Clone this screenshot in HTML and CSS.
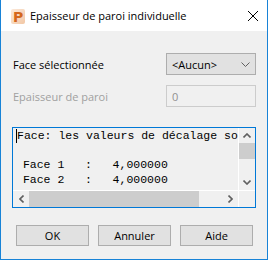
FILE: index.html
```html
<!DOCTYPE html>
<html lang="fr">
<head>
  <meta charset="UTF-8" />
  <title>Epaisseur de paroi individuelle</title>
  <link rel="stylesheet" href="styles.css">
</head>
<body>
  <div class="window">
    <!-- Barre de titre -->
    <div class="titlebar">
      <svg class="app-icon" width="14" height="15" viewBox="0 0 14 15">
        <defs>
          <linearGradient id="bg" x1="0" y1="0" x2="1" y2="1">
            <stop offset="0" stop-color="#fbe9da" />
            <stop offset="1" stop-color="#f2c7a4" />
          </linearGradient>
        </defs>
        <rect x="0" y="0" width="14" height="15" rx="2" fill="url(#bg)" />
        <text x="2" y="13" font-family="DejaVu Sans" font-weight="bold" font-size="14" fill="#d4671c">P</text>
      </svg>
      <span class="title">Epaisseur de paroi individuelle</span>
      <svg class="close" width="10" height="10" viewBox="0 0 10 10">
        <path d="M0 0 L10 10 M10 0 L0 10" stroke="#000" stroke-width="1" fill="none" />
      </svg>
    </div>

    <div class="client">
      <!-- Face -->
      <div class="field-row">
        <label class="label">Face sélectionnée</label>
        <div class="combo">
          <span>&lt;Aucun&gt;</span>
          <svg width="9" height="5" viewBox="0 0 9 5">
            <polyline points="0.5,0.5 4.5,4.5 8.5,0.5" stroke="#606060" stroke-width="1" fill="none" />
          </svg>
        </div>
      </div>

      <!-- Epaisseur -->
      <div class="field-row">
        <label class="label disabled">Epaisseur de paroi</label>
        <div class="edit disabled">0</div>
      </div>

      <!-- Zone de texte -->
      <div class="log">
        <div class="log-text"><span class="caret"></span>Face: les valeurs de décalage sont

 Face 1   :   4,000000
 Face 2   :   4,000000</div>
        <div class="vscroll">
          <div class="arrow">
            <svg width="8" height="5" viewBox="0 0 8 5"><polyline points="0.5,4.5 4,1 7.5,4.5" stroke="#606060" stroke-width="1.6" fill="none" /></svg>
          </div>
          <div class="vthumb"></div>
          <div class="arrow end">
            <svg width="8" height="5" viewBox="0 0 8 5"><polyline points="0.5,0.5 4,4 7.5,0.5" stroke="#606060" stroke-width="1.6" fill="none" /></svg>
          </div>
        </div>
        <div class="hscroll">
          <div class="arrow">
            <svg width="5" height="8" viewBox="0 0 5 8"><polyline points="4.5,0.5 1,4 4.5,7.5" stroke="#606060" stroke-width="1.6" fill="none" /></svg>
          </div>
          <div class="hthumb"></div>
          <div class="arrow end">
            <svg width="5" height="8" viewBox="0 0 5 8"><polyline points="0.5,0.5 4,4 0.5,7.5" stroke="#606060" stroke-width="1.6" fill="none" /></svg>
          </div>
        </div>
        <div class="corner"></div>
      </div>

      <!-- Boutons -->
      <div class="buttons">
        <button class="btn">OK</button>
        <button class="btn">Annuler</button>
        <button class="btn">Aide</button>
      </div>
    </div>
  </div>
</body>
</html>
```

FILE: styles.css
```css
body {
  margin: 0;
  font-family: "Open Sans", "Noto Sans", sans-serif;
  font-size: 11px;
  color: #000;
}

.window {
  width: 268px;
  height: 260px;
  box-sizing: border-box;
  border: 1px solid #1883d7;
  border-top: none;
  background-color: #f0f0f0;
  display: flex;
  flex-direction: column;
}

.titlebar {
  height: 31px;
  flex-shrink: 0;
  background-color: #fff;
  display: flex;
  align-items: center;
  padding-left: 10px;
}

.app-icon {
  margin-right: 5px;
  margin-top: 1px;
}

.title {
  flex: 1;
}

.close {
  margin-right: 9px;
}

.client {
  padding: 22px 11px 0 11px;
  display: flex;
  flex-direction: column;
}

.field-row {
  display: flex;
  justify-content: space-between;
  align-items: center;
  height: 22px;
}

.field-row + .field-row {
  margin-top: 10px;
}

.label {
  padding-left: 1px;
}

.label.disabled {
  color: #a0a0a0;
}

.combo, .edit {
  width: 90px;
  height: 22px;
  box-sizing: border-box;
  display: flex;
  align-items: center;
  padding: 0 5px;
}

.combo {
  justify-content: space-between;
  border: 1px solid #adadad;
  background-color: #e1e1e1;
}

.edit {
  border: 1px solid #cccccc;
  background-color: #f0f0f0;
}

.edit.disabled {
  color: #909090;
}

.log {
  margin-top: 20px;
  height: 81px;
  box-sizing: border-box;
  border: 1px solid #0078d7;
  background-color: #f0f0f0;
  display: grid;
  grid-template-columns: 1fr 17px;
  grid-template-rows: 1fr 17px;
}

.log-text {
  overflow: hidden;
  white-space: pre;
  font-family: "Liberation Mono", monospace;
  font-size: 11.5px;
  line-height: 14.5px;
  padding: 1px 0 0 3px;
}

.caret {
  display: inline-block;
  width: 1px;
  height: 14px;
  background-color: #000;
  vertical-align: top;
}

.vscroll {
  border-left: 1px solid #fff;
  display: flex;
  flex-direction: column;
}

.hscroll {
  border-top: 1px solid #fff;
  display: flex;
}

.arrow {
  width: 16px;
  height: 16px;
  display: flex;
  align-items: center;
  justify-content: center;
  flex-shrink: 0;
}

.vscroll .arrow {
  height: 15px;
}

.arrow.end {
  margin-top: auto;
  margin-left: auto;
}

.hscroll .arrow.end {
  margin-top: 0;
}

.vthumb {
  height: 16px;
  background-color: #cdcdcd;
}

.hthumb {
  width: 170px;
  background-color: #cdcdcd;
}

.corner {
  border-top: 1px solid #fff;
  border-left: 1px solid #fff;
}

.buttons {
  margin-top: 17px;
  padding-left: 4px;
  display: flex;
  gap: 9px;
}

.btn {
  width: 73px;
  height: 21px;
  padding: 0;
  border: 1px solid #adadad;
  background-color: #e1e1e1;
  font-family: "Open Sans", "Noto Sans", sans-serif;
  font-size: 11px;
  color: #000;
}
```
